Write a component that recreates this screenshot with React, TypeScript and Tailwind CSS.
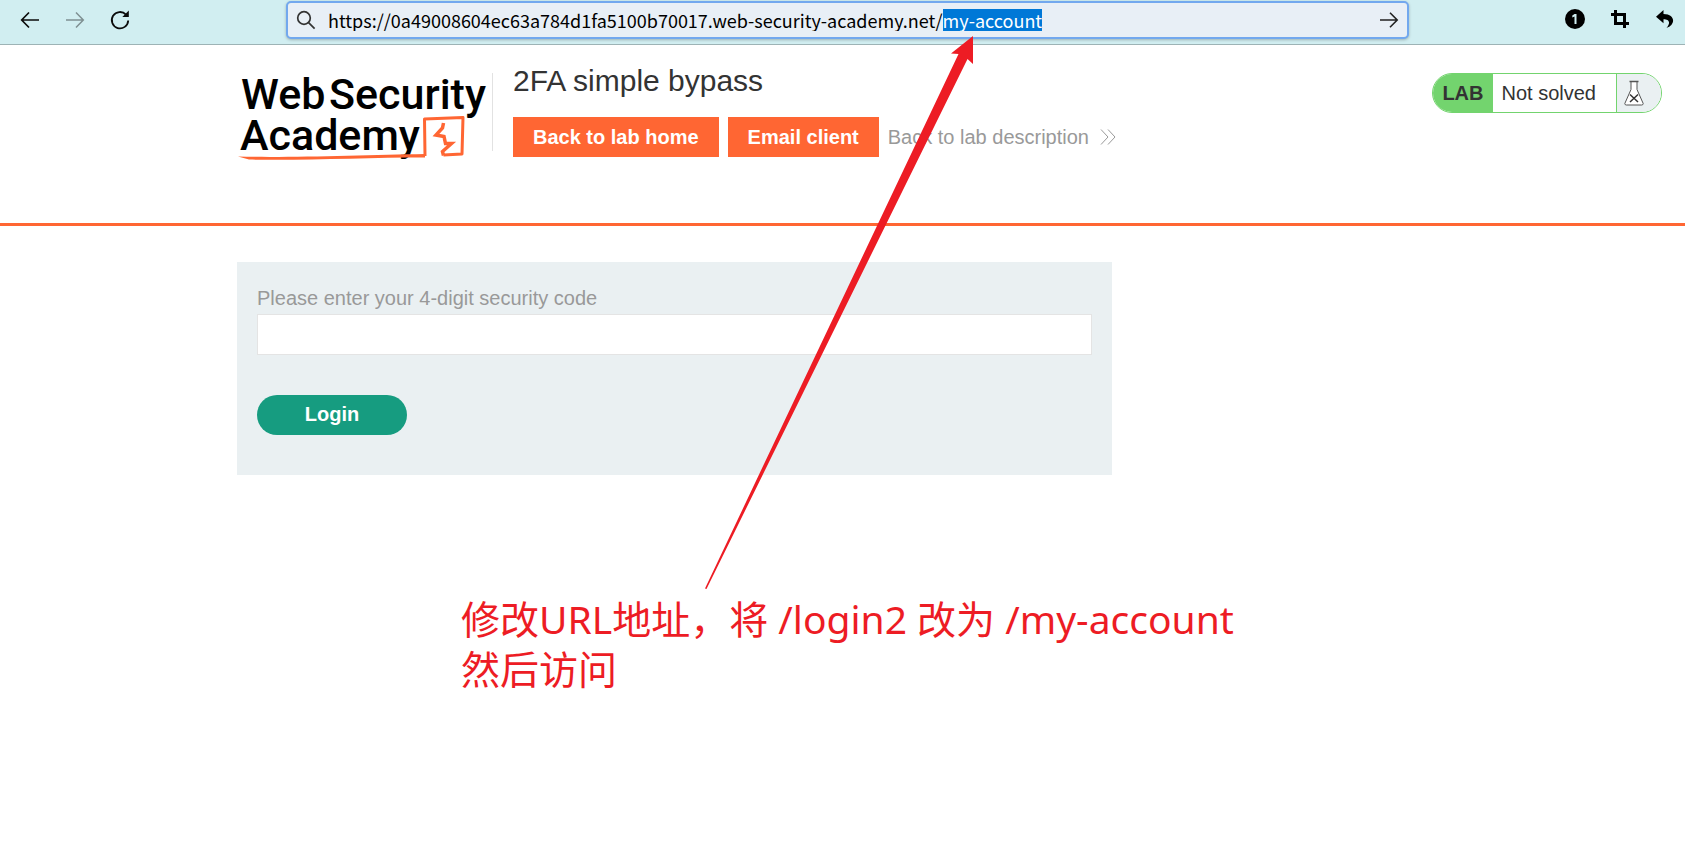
import { useEffect, useRef } from "react";

const baseUrl = "https://0a49008604ec63a784d1fa5100b70017.web-security-academy.net/";
const path = "my-account";

function Toolbar() {
  const address = useRef<HTMLInputElement>(null);

  useEffect(() => {
    const el = address.current;
    if (!el) return;
    el.focus();
    el.setSelectionRange(baseUrl.length, baseUrl.length + path.length);
  }, []);

  return (
    <header className="flex h-[45px] items-start border-b border-[#9db3b5] bg-[#d1eef1]">
      <nav className="flex h-10 w-[286px] shrink-0 items-center gap-[23px] pl-[19px]" aria-label="History">
        <button type="button" aria-label="Back">
          <svg className="h-[22px] w-[22px]" viewBox="0 0 22 22" fill="none" stroke="#0b0b0b" strokeWidth="1.7">
            <path d="M20 11H3M10 3.5 2.7 11l7.3 7.5" />
          </svg>
        </button>
        <button type="button" aria-label="Forward" disabled>
          <svg className="h-[22px] w-[22px]" viewBox="0 0 22 22" fill="none" stroke="#7f9092" strokeWidth="1.5">
            <path d="M2 11H19M12 3.5 19.300 11l-7.300 7.500" />
          </svg>
        </button>
        <button type="button" aria-label="Reload">
          <svg className="h-[22px] w-[22px]" viewBox="0 0 22 22" fill="none" stroke="#0b0b0b" strokeWidth="1.8">
            <path d="M17 5.600A8.200 8.200 0 1 0 19.200 11.500" />
            <path d="M19.800 1.500v6.500h-6.500z" fill="#0b0b0b" stroke="none" />
          </svg>
        </button>
      </nav>
      <form
        className="mt-px flex h-[38px] flex-1 items-center rounded-[5px] border-2 border-[#72a8ee] bg-[#e8eff6] pr-[7px] pl-2 shadow-[0_1px_3px_rgba(0,0,0,0.25)]"
        onSubmit={(e) => e.preventDefault()}
      >
        <svg className="h-5 w-5 shrink-0" viewBox="0 0 20 20" fill="none" stroke="#333" strokeWidth="1.7">
          <circle cx="8" cy="8" r="6.300" />
          <path d="m12.600 12.600 6 6" />
        </svg>
        <input
          ref={address}
          type="text"
          aria-label="Address"
          spellCheck={false}
          defaultValue={baseUrl + path}
          className="h-[22px] min-w-0 flex-1 bg-transparent pl-3 font-['Noto_Sans_CJK_SC',sans-serif] text-[18px] leading-[22px] text-black outline-none selection:bg-[#0078d7] selection:text-white"
        />
        <button type="submit" aria-label="Go">
          <svg className="h-[22px] w-[22px]" viewBox="0 0 22 22" fill="none" stroke="#222" strokeWidth="1.6">
            <path d="M2 11H19M12 3.700 19.200 11l-7.200 7.300" />
          </svg>
        </button>
      </form>
      <div className="flex h-[38px] w-[276px] shrink-0 items-center justify-end gap-[25px] pr-[10px]">
        <button type="button" aria-label="Password manager">
          <svg className="h-5 w-5" viewBox="0 0 20 20">
            <circle cx="10" cy="10" r="10" fill="#000" />
            <path d="M9.500 5h2v10h-2V7.600L7.300 8.500V6.600z" fill="#d1eef1" />
          </svg>
        </button>
        <button type="button" aria-label="Capture">
          <svg className="h-5 w-5" viewBox="0 0 20 20" fill="none" stroke="#000" strokeWidth="3">
            <path d="M5.500 1v13.500H19M1 5.500h13.500V19" />
          </svg>
        </button>
        <button type="button" aria-label="Undo">
          <svg className="h-5 w-5" viewBox="0 0 20 20">
            <path d="M8.500 1 1 7.700l7.500 6.600V10.300C13.500 10.300 16.500 13 11.500 19 20.500 16.500 21 5 8.500 5z" />
          </svg>
        </button>
      </div>
    </header>
  );
}

function Logo() {
  return (
    <a href="#academy" aria-label="Web Security Academy" className="block shrink-0 pt-[18px]">
      <svg className="h-[100px] w-[255px]" viewBox="0 0 255 100">
        <g fontFamily="Roboto, sans-serif" fontSize="43" fontWeight="500" fill="#000">
          <text x="4" y="46">Web</text>
          <text x="92" y="46">Security</text>
          <text x="3" y="87">Academy</text>
        </g>
        <g fill="none" stroke="#ff6633" strokeLinejoin="round">
          <path strokeWidth="3" d="M188 93 187.500 56 226 54.500 225 91 206.500 92" />
          <path strokeWidth="3.500" strokeLinejoin="miter" d="m206.500 60-1 5-6.500 7 8 1.500 1.500 7h6l-9 8 1 4" />
        </g>
        <path fill="#ff6633" d="M1 93.500C50 95 130 92 188 91v3.500C130 94.500 60 98 12 96.500z" />
      </svg>
    </a>
  );
}

function LabStatus() {
  return (
    <div className="mt-7 flex h-10 overflow-hidden rounded-full border border-[#73d46e] text-xl text-[#333]">
      <span className="flex items-center bg-[#73d46e] px-[9px] font-bold">LAB</span>
      <span className="flex items-center bg-white pr-5 pl-[9px]">Not solved</span>
      <span className="flex items-center border-l border-[#73d46e] bg-[#eaf0f2] pr-[17px] pl-[7px]">
        <svg className="h-[26px] w-5" viewBox="0 0 20 26" fill="#fff" stroke="#555" strokeWidth="1">
          <path d="M7 1.500v8L.800 23.500q0 1.500 1.500 1.500h15.400q1.500 0 1.500-1.500L13 9.500v-8" />
          <path d="M5.500 1.500h9" strokeWidth="1.600" />
          <path d="m6 14.500 8 7.500m0-7.500-8 7.500" stroke="#333" strokeWidth="1.500" />
        </svg>
      </span>
    </div>
  );
}

const orangeButton = "flex h-10 items-center bg-[#ff6633] px-5 font-bold text-white";

function LabHeader() {
  return (
    <section className="flex h-[181px] items-start border-b-3 border-[#ff6633] pr-[23px] pl-[237px]">
      <Logo />
      <div className="mt-7 h-[78px] w-px bg-[#e2e2e2]" />
      <div className="flex-1 pt-[18px] pl-5">
        <h1 className="text-[30px] leading-9 text-[#333]">2FA simple bypass</h1>
        <div className="mt-[18px] flex items-center gap-[9px] text-xl">
          <a href="#lab" className={orangeButton}>Back to lab home</a>
          <a href="#email" className={orangeButton}>Email client</a>
          <a href="#description" className="flex items-center gap-[11px] text-[#999]">
            Back to lab description
            <svg className="h-4 w-4" viewBox="0 0 16 16" fill="none" stroke="#999" strokeWidth="1">
              <path d="m1 .500 7 7.500-7 7.500M8 .500 15 8l-7 7.500" />
            </svg>
          </a>
        </div>
      </div>
      <LabStatus />
    </section>
  );
}

function LoginForm() {
  return (
    <form className="mt-9 ml-[237px] w-full max-w-[875px] bg-[#eaf0f2] p-5 pb-10 text-xl" onSubmit={(e) => e.preventDefault()}>
      <label htmlFor="code" className="block leading-8 text-[#999]">
        Please enter your 4-digit security code
      </label>
      <input id="code" type="text" className="block h-[41px] w-full border border-[#e4e4e4] bg-white px-3 outline-none" />
      <button type="submit" className="mt-10 block h-10 w-[150px] rounded-full bg-[#169c80] pb-0.5 font-bold text-white">
        Login
      </button>
    </form>
  );
}

export default function App() {
  return (
    <div className="relative min-h-screen bg-white font-['Liberation_Sans',Arial,sans-serif]">
      <Toolbar />
      <main>
        <LabHeader />
        <LoginForm />
      </main>
      <svg className="pointer-events-none absolute top-[36px] left-[705px] h-[553px] w-[269px]" viewBox="0 0 269 553">
        <path d="M268 0 246 17.500 253.500 18 0 552.500 1.500 553 262.500 23 268 28z" fill="#ed1c24" />
      </svg>
      <p className="absolute top-[594px] left-[461px] font-['Noto_Sans','Noto_Sans_CJK_SC',sans-serif] text-[39px] leading-[50px] whitespace-nowrap text-[#ed1c24]">
        修改URL地址，将 /login2 改为 /my-account
        <br />
        然后访问
      </p>
    </div>
  );
}
